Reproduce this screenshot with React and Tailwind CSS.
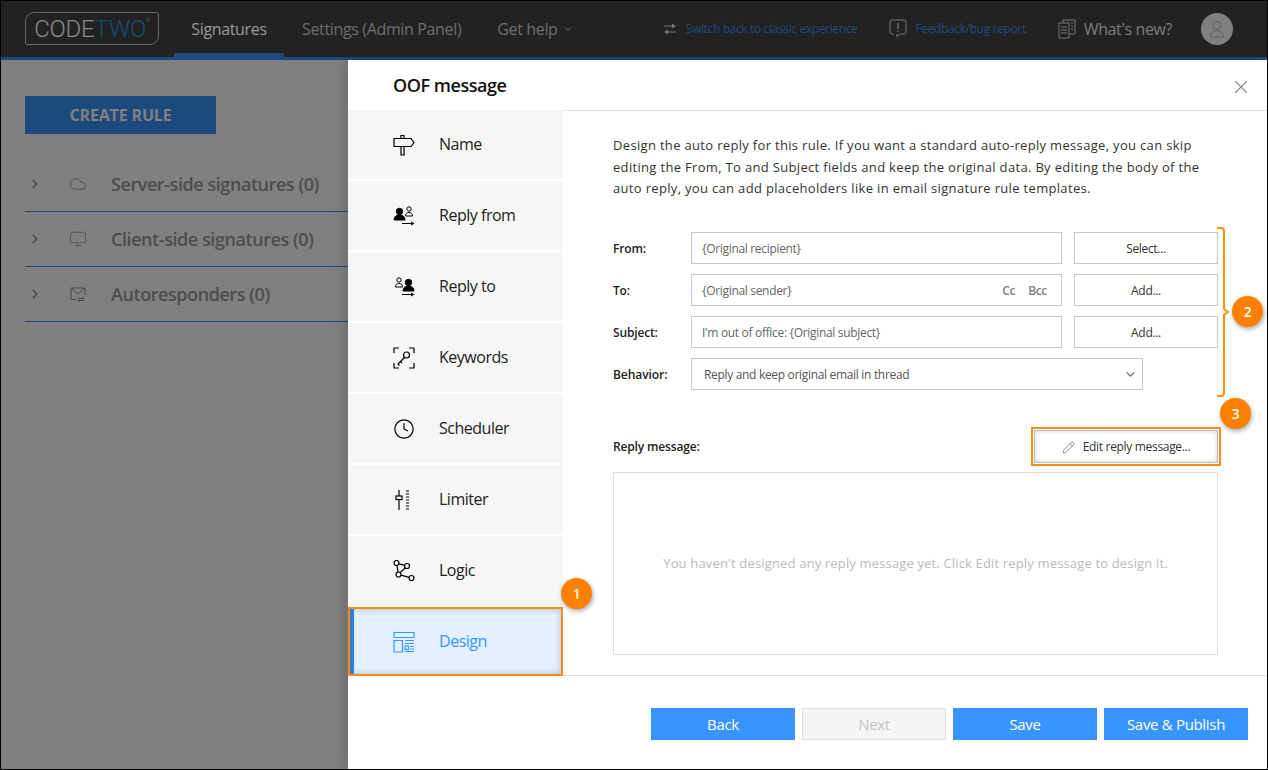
import { ChevronRight, ChevronDown, X, Cloud, Monitor, Pencil, Clock } from 'lucide-react'

const NAV = [
  { label: 'Name', icon: 'name' },
  { label: 'Reply from', icon: 'from' },
  { label: 'Reply to', icon: 'to' },
  { label: 'Keywords', icon: 'keywords' },
  { label: 'Scheduler', icon: 'scheduler' },
  { label: 'Limiter', icon: 'limiter' },
  { label: 'Logic', icon: 'logic' },
  { label: 'Design', icon: 'design', active: true },
]

const RULES = [
  { label: 'Server-side signatures (0)', icon: <Cloud size={18} strokeWidth={1} /> },
  { label: 'Client-side signatures (0)', icon: <Monitor size={18} strokeWidth={1} /> },
  { label: 'Autoresponders (0)', icon: <MailLoop /> },
]

const FIELDS = [
  { label: 'From:', value: '{Original recipient}', action: 'Select...' },
  { label: 'To:', value: '{Original sender}', action: 'Add...', cc: true },
  { label: 'Subject:', value: "I'm out of office: {Original subject}", action: 'Add...' },
]

function MailLoop() {
  return (
    <svg width="18" height="18" viewBox="0 0 18 18" fill="none" stroke="currentColor" strokeWidth="1">
      <path d="M8 14.5H2V3h14v7" />
      <path d="M2 3l7 6 7-6" />
      <path d="M9 13.5h6l-1.5-1.5M15 15.5H9l1.5 1.5" />
    </svg>
  )
}

function People({ flip }) {
  return (
    <svg width="22" height="22" viewBox="0 0 22 22" fill="none" stroke="#000" strokeWidth="1">
      <g transform={flip ? 'matrix(-1 0 0 1 22 0)' : undefined}>
        <circle cx="6.5" cy="6.500" r="3.200" fill="#000" />
        <path d="M1 15c0-3 2-5 5.500-5s5.500 2 5.500 5z" fill="#000" />
        <circle cx="16" cy="4" r="2.200" />
        <path d="M12.500 11c0-2.300 1.400-3.500 3.500-3.500s3.500 1.200 3.500 3.500z" />
      </g>
      <path d="M9 18.500h10" />
      <path d="M18 16.500l3.500 2-3.500 2z" fill="#000" stroke="none" />
    </svg>
  )
}

function NavIcon({ name }) {
  if (name === 'from') return <People />
  if (name === 'to') return <People flip />
  if (name === 'scheduler') return <Clock size={22} strokeWidth={1.3} color="#000" />
  const base = { width: 22, height: 22, viewBox: '0 0 22 22', fill: 'none', stroke: '#000', strokeWidth: 1.2 }
  if (name === 'name') {
    return (
      <svg {...base}>
        <path d="M1 4.500h17l3 4-3 4H1z" />
        <path d="M8 4.500V1.500h3v3M8 12.500V21h3v-8.500" />
      </svg>
    )
  }
  if (name === 'keywords') {
    return (
      <svg {...base}>
        <path d="M1 6V1h5M16 1h5v5M1 16v5h5M16 21h5v-5" />
        <circle cx="13.500" cy="8" r="3" />
        <path d="M11.500 10.500L5 17l1.500 1.500M7.500 14.500l1.500 1.500" />
      </svg>
    )
  }
  if (name === 'limiter') {
    return (
      <svg {...base}>
        <path d="M6 1v20" />
        <rect x="3" y="7" width="6" height="3.500" fill="#fff" />
        <path d="M13 2h3M13 5h3M13 8h3M13 11h3M13 14h3M13 17h3M13 20h3" strokeWidth="1" />
      </svg>
    )
  }
  if (name === 'logic') {
    return (
      <svg {...base}>
        <circle cx="3.500" cy="3" r="2.500" />
        <circle cx="14" cy="6" r="2.500" />
        <circle cx="5.500" cy="14.500" r="2.500" />
        <circle cx="18.500" cy="18" r="2.500" />
        <path d="M6 3.800l5.500 1.500M4 5.500l1 6.500M12.200 8l-5 4.500M8 15.200l8 2.200" />
      </svg>
    )
  }
  return (
    <svg {...base} stroke="#3895ff">
      <path d="M1 1.500h20v5H1zM1 9.500h8.500V21H1z" />
      <path d="M12 9.500h9M12 12.500h9M12 20.500h9" />
      <rect x="12" y="15" width="3.500" height="3.500" />
      <path d="M17 15.500h4M17 18h4" />
    </svg>
  )
}

function Badge({ n, className }) {
  return (
    <div className={`absolute flex h-[31px] w-[31px] items-center justify-center rounded-full bg-[#ff8000] text-[14px] font-semibold text-white shadow-[1px_2px_5px_rgba(0,0,0,0.35)] ${className}`}>
      {n}
    </div>
  )
}

export default function App() {
  return (
    <div className="relative flex h-[770px] w-[1268px] flex-col overflow-hidden border border-black bg-white font-['Open_Sans','Noto_Sans',sans-serif] tracking-[-0.02em]">
      {/* top bar */}
      <header className="flex h-[59px] shrink-0 items-stretch border-b-[3px] border-[#1d4a7d] bg-[#222222] pl-6">
        <div className="mt-[11px] flex h-[33px] w-[134px] items-center justify-center rounded-tl-[9px] rounded-tr-[2px] rounded-br-[9px] rounded-bl-[2px] border border-[#666666] font-['Roboto',sans-serif] text-[24px] font-light tracking-[-0.01em]">
          <span className="text-[#8a8a8a]">CODE</span>
          <span className="text-[#14506e]">TWO</span>
          <sup className="mb-3 text-[5px] text-[#666666]">®</sup>
        </div>
        <nav className="ml-[15px] flex items-stretch text-[16px] tracking-[-0.022em]">
          <div className="flex w-[110px] items-center justify-center border-b-[4px] border-[#1d4a7d] pt-1 text-[#9a9a9a]">Signatures</div>
          <div className="ml-[18px] flex items-center text-[#6e6e6e]">Settings (Admin Panel)</div>
          <div className="ml-[36px] flex items-center gap-1 text-[#6e6e6e]">
            Get help <ChevronDown size={12} />
          </div>
        </nav>
        <div className="ml-auto flex items-center pr-[34px] text-[12px] tracking-[-0.03em]">
          <svg width="14" height="14" viewBox="0 0 14 14" fill="#777777">
            <path d="M1 3.500h8v1H1zM9 1.500L13 4 9 6.500zM5 9.500h8v1H5zM5 7.500L1 10l4 2.500z" />
          </svg>
          <span className="ml-[9px] text-[#1d4a7d]">Switch back to classic experience</span>
          <svg className="ml-[32px]" width="18" height="20" viewBox="0 0 18 20" fill="none" stroke="#777777" strokeWidth="1">
            <path d="M5 15H3a2 2 0 0 1-2-2V3a2 2 0 0 1 2-2h12a2 2 0 0 1 2 2v10a2 2 0 0 1-2 2h-4l-3 3v-3" />
            <path d="M9 4v6M9 11.500v1.500" strokeWidth="1.400" />
          </svg>
          <span className="ml-[8px] text-[#1d4a7d]">Feedback/bug report</span>
          <svg className="ml-[32px]" width="18" height="20" viewBox="0 0 18 20" fill="none" stroke="#777777" strokeWidth="1">
            <path d="M1 4h10v15H1zM5 4V1h12v14h-6" />
            <path d="M3 8h6M3 11h6M3 14h6M13 4h2M13 7h2M13 10h2" />
          </svg>
          <span className="ml-[8px] text-[16px] tracking-[-0.025em] text-[#7d7d7d]">What's new?</span>
          <div className="ml-[29px] flex h-[32px] w-[32px] items-center justify-center rounded-full bg-[#808080]">
            <svg width="16" height="18" viewBox="0 0 16 18" fill="none" stroke="#606060" strokeWidth="1">
              <circle cx="8" cy="5.500" r="4" />
              <path d="M1.500 17c0-4 2.500-6 6.500-6s6.500 2 6.500 6z" />
            </svg>
          </div>
        </div>
      </header>

      <div className="flex min-h-0 flex-1">
        {/* dimmed rules page */}
        <aside className="w-[347px] shrink-0 bg-[#808080] pl-6 pt-9">
          <div className="flex h-[38px] w-[191px] items-center justify-center bg-[#1d4a7d] text-[16px] font-bold tracking-[-0.01em] text-[#808080]">CREATE RULE</div>
          <div className="mt-[23px]">
            {RULES.map((r) => (
              <div key={r.label} className="flex h-[55px] items-center border-b border-[#1d4a7d] text-[#4d4d4d]">
                <ChevronRight size={14} strokeWidth={3} className="ml-[3px]" />
                <span className="ml-[27px] flex w-[42px] text-[#4a4a4a]">{r.icon}</span>
                <span className="text-[18px] font-semibold tracking-[-0.024em]">{r.label}</span>
              </div>
            ))}
          </div>
        </aside>

        {/* modal */}
        <main className="flex min-w-0 flex-1 bg-white shadow-[-6px_0_10px_rgba(0,0,0,0.12)]">
          <div className="w-[215px] shrink-0">
            <div className="flex h-[50px] items-center pl-[45px] text-[18px] font-semibold tracking-[-0.025em] text-[#111111]">OOF message</div>
            <div className="flex flex-col gap-[2px]">
              {NAV.map((item) => (
                <div
                  key={item.label}
                  className={`flex h-[69px] items-center text-[16px] tracking-[-0.03em] ${
                    item.active
                      ? 'border-2 border-[#ff8a14] bg-[#e3f0ff] pl-[43px] text-[#3895ff] shadow-[inset_4px_0_0_#2f80e0,inset_0_0_7px_rgba(0,0,0,0.22)]'
                      : 'bg-[#f6f6f6] pl-[45px] text-[#222222]'
                  }`}
                >
                  <span className="flex w-[46px]"><NavIcon name={item.icon} /></span>
                  <span className="pb-[2px]">{item.label}</span>
                </div>
              ))}
            </div>
          </div>

          <div className="flex min-w-0 flex-1 flex-col">
            <div className="flex h-[51px] shrink-0 items-center justify-end border-b border-[#e0e0e0] pr-[15px] pt-[3px]">
              <X size={22} strokeWidth={1.2} className="text-[#8a8a8a]" />
            </div>
            <div className="flex-1 pl-[50px] pr-[49px] pt-[24px]">
              <p className="text-[13px] leading-[21.5px] tracking-[0.025em] text-[#333333]">
                Design the auto reply for this rule. If you want a standard auto-reply message, you can skip editing the From, To and Subject fields and keep the original data. By editing the body of the auto reply, you can add placeholders like in email signature rule templates.
              </p>
              <div className="mt-[32px] flex flex-col gap-[10px] text-[12px]">
                {FIELDS.map((f) => (
                  <div key={f.label} className="flex h-[32px] items-center">
                    <span className="w-[78px] pt-[2px] font-semibold tracking-[-0.013em] text-[#222222]">{f.label}</span>
                    <div className="flex h-full w-[371px] items-center justify-between border border-[#c8c8c8] pl-[10px] pr-[14px] pt-[2px] text-[#666666]">
                      <span>{f.value}</span>
                      {f.cc && (
                        <span className="flex gap-[13px] font-semibold text-[#808080]">
                          <span>Cc</span>
                          <span>Bcc</span>
                        </span>
                      )}
                    </div>
                    <div className="ml-[12px] flex h-full w-[144px] items-center justify-center border border-[#c8c8c8] pt-[2px] text-[#333333]">{f.action}</div>
                  </div>
                ))}
                <div className="flex h-[32px] items-center">
                  <span className="w-[78px] pt-[2px] font-semibold tracking-[-0.005em] text-[#222222]">Behavior:</span>
                  <div className="flex h-full w-[452px] items-center justify-between border border-[#c8c8c8] pl-[12px] pr-[5px] pt-[2px] text-[#555555]">
                    <span>Reply and keep original email in thread</span>
                    <ChevronDown size={13} strokeWidth={2.5} className="text-[#666666]" />
                  </div>
                </div>
              </div>
              <div className="mt-[40px] flex h-[33px] items-center justify-between text-[12px]">
                <span className="pt-[2px] font-semibold tracking-[-0.013em] text-[#222222]">Reply message:</span>
                <div className="flex h-full w-[184px] items-center justify-center gap-[8px] border border-[#c0c0c0] pt-[2px] text-[#333333] shadow-[inset_0_0_4px_rgba(0,0,0,0.2)] outline-2 outline-offset-1 outline-[#ff8a14]">
                  <Pencil size={13} strokeWidth={1.2} className="text-[#555555]" />
                  Edit reply message...
                </div>
              </div>
              <div className="mt-[9px] flex h-[183px] items-center justify-center border border-[#e0e0e0] pt-[2px] text-[13px] tracking-[0.012em] text-[#bbbbbb]">
                You haven't designed any reply message yet. Click Edit reply message to design it.
              </div>
            </div>
            <div className="flex h-[94px] shrink-0 items-start justify-end gap-[7px] border-t border-[#e0e0e0] pr-[19px] pt-[32px] text-[15px]">
              <div className="flex h-[32px] w-[144px] items-center justify-center bg-[#3895ff] text-white">Back</div>
              <div className="flex h-[32px] w-[144px] items-center justify-center border border-[#dedede] bg-[#f5f5f5] text-[#c4c4c4]">Next</div>
              <div className="flex h-[32px] w-[144px] items-center justify-center bg-[#3895ff] text-white">Save</div>
              <div className="flex h-[32px] w-[144px] items-center justify-center bg-[#3895ff] text-white">Save &amp; Publish</div>
            </div>
          </div>
        </main>
      </div>

      {/* annotations */}
      <svg className="absolute left-[1215px] top-[226px]" width="14" height="170" viewBox="0 0 14 170" fill="none" stroke="#ff8a14" strokeWidth="2">
        <path d="M1 1h4q3 0 3 3v78l4 3-4 3v78q0 3-3 3H1" />
      </svg>
      <Badge n="1" className="left-[560px] top-[577px]" />
      <Badge n="2" className="left-[1231px] top-[295px]" />
      <Badge n="3" className="left-[1219px] top-[397px]" />
    </div>
  )
}
